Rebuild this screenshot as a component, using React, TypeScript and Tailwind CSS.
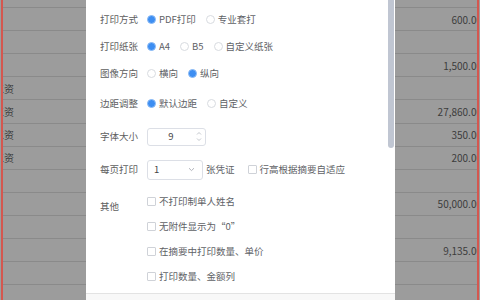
import { ReactNode } from "react";

const rows: { left?: string; right?: string }[] = [
  {},
  { right: "600.00" },
  {},
  { right: "1,500.00" },
  { left: "工资" },
  { left: "工资", right: "27,860.00" },
  { left: "工资", right: "350.00" },
  { left: "工资", right: "200.00" },
  {},
  { right: "50,000.00" },
  {},
  { right: "9,135.00" },
  {},
  {},
];

function Radio({ label, checked }: { label: string; checked?: boolean }) {
  return (
    <span className="flex items-center mr-[10px]">
      <span
        className={`w-[9px] h-[9px] rounded-full border ${
          checked ? "bg-[#3d8ef2] border-[#8dbcf5]" : "bg-white border-[#d8dbe0]"
        }`}
      />
      <span className="ml-[3px] text-[#606266]">{label}</span>
    </span>
  );
}

function Check({ label }: { label: string }) {
  return (
    <span className="flex items-center">
      <span className="w-[9px] h-[9px] rounded-[1px] border border-[#cfd2d8] bg-white" />
      <span className="ml-[3px] text-[#606266]">{label}</span>
    </span>
  );
}

function Row({ label, children, className = "" }: { label: string; children: ReactNode; className?: string }) {
  return (
    <div className={`flex items-center h-[27px] ${className}`}>
      <div className="w-[47px] text-[#5e5e5e]">{label}</div>
      <div className="flex items-center">{children}</div>
    </div>
  );
}

export default function App() {
  return (
    <div className="relative w-[480px] h-[300px] overflow-hidden bg-[#9c9c9c] font-['Noto_Sans_CJK_SC',sans-serif]">
      {/* dimmed table behind the dialog */}
      <div className="h-full ml-[1px] mr-[1px] border-x-2 border-[#d4574f] overflow-hidden">
        <div className="mt-[-15px]">
          {rows.map((r, i) => (
            <div
              key={i}
              className="h-[23.1px] border-b border-[#8a8a8a] flex items-center justify-between text-[10px] text-[#3c3c3c]"
            >
              <span className="ml-[-9px]">{r.left ?? ""}</span>
              <span className="mr-[-5px]">{r.right ?? ""}</span>
            </div>
          ))}
        </div>
      </div>

      {/* print settings dialog */}
      <div className="absolute top-0 bottom-0 left-[86px] w-[309px] bg-white flex flex-col text-[9.5px]">
        <div className="absolute right-[1px] top-0 w-[6px] h-[148px] rounded-b-[3px] bg-[#c0c6d2]" />
        <div className="pl-[14px] pt-[6px]">
          <Row label="打印方式">
            <Radio label="PDF打印" checked />
            <Radio label="专业套打" />
          </Row>
          <Row label="打印纸张">
            <Radio label="A4" checked />
            <Radio label="B5" />
            <Radio label="自定义纸张" />
          </Row>
          <Row label="图像方向">
            <Radio label="横向" />
            <Radio label="纵向" checked />
          </Row>
          <Row label="边距调整" className="mt-[3px]">
            <Radio label="默认边距" checked />
            <Radio label="自定义" />
          </Row>
          <Row label="字体大小" className="mt-[6px]">
            <div className="flex items-center w-[59px] h-[18px] border border-[#dcdfe6] rounded-[3px]">
              <span className="flex-1 text-center text-[#444]">9</span>
              <div className="w-[10px] h-full flex flex-col items-center justify-center gap-[1px] mr-[1px]">
                <svg width="6" height="5" viewBox="0 0 6 5" className="text-[#b4b8bf]">
                  <path d="M1 3.5 L3 1.5 L5 3.5" fill="none" stroke="currentColor" strokeWidth="0.8" />
                </svg>
                <svg width="6" height="5" viewBox="0 0 6 5" className="text-[#b4b8bf]">
                  <path d="M1 1.5 L3 3.5 L5 1.5" fill="none" stroke="currentColor" strokeWidth="0.8" />
                </svg>
              </div>
            </div>
          </Row>
          <Row label="每页打印" className="mt-[6px]">
            <div className="flex items-center justify-between w-[56px] h-[20px] border border-[#dcdfe6] rounded-[3px] pl-[6px] pr-[7px]">
              <span className="text-[#444]">1</span>
              <svg width="7" height="5" viewBox="0 0 7 5" className="text-[#a8acb3]">
                <path d="M1 1.2 L3.5 3.6 L6 1.2" fill="none" stroke="currentColor" strokeWidth="0.9" />
              </svg>
            </div>
            <span className="ml-[3px] text-[#606266]">张凭证</span>
            <span className="ml-[13px]">
              <Check label="行高根据摘要自适应" />
            </span>
          </Row>
          <div className="flex mt-[6px]">
            <div className="w-[47px] text-[#5e5e5e] pt-[5px] leading-[25px]">其他</div>
            <div className="flex flex-col">
              <div className="h-[25px] flex items-center">
                <Check label="不打印制单人姓名" />
              </div>
              <div className="h-[25px] flex items-center">
                <Check label="无附件显示为“0”" />
              </div>
              <div className="h-[25px] flex items-center">
                <Check label="在摘要中打印数量、单价" />
              </div>
              <div className="h-[25px] flex items-center">
                <Check label="打印数量、金额列" />
              </div>
            </div>
          </div>
        </div>
        <div className="mt-[4px] flex-1 border-t border-[#e3e3e3] bg-[#f8f8f8]" />
      </div>
    </div>
  );
}
